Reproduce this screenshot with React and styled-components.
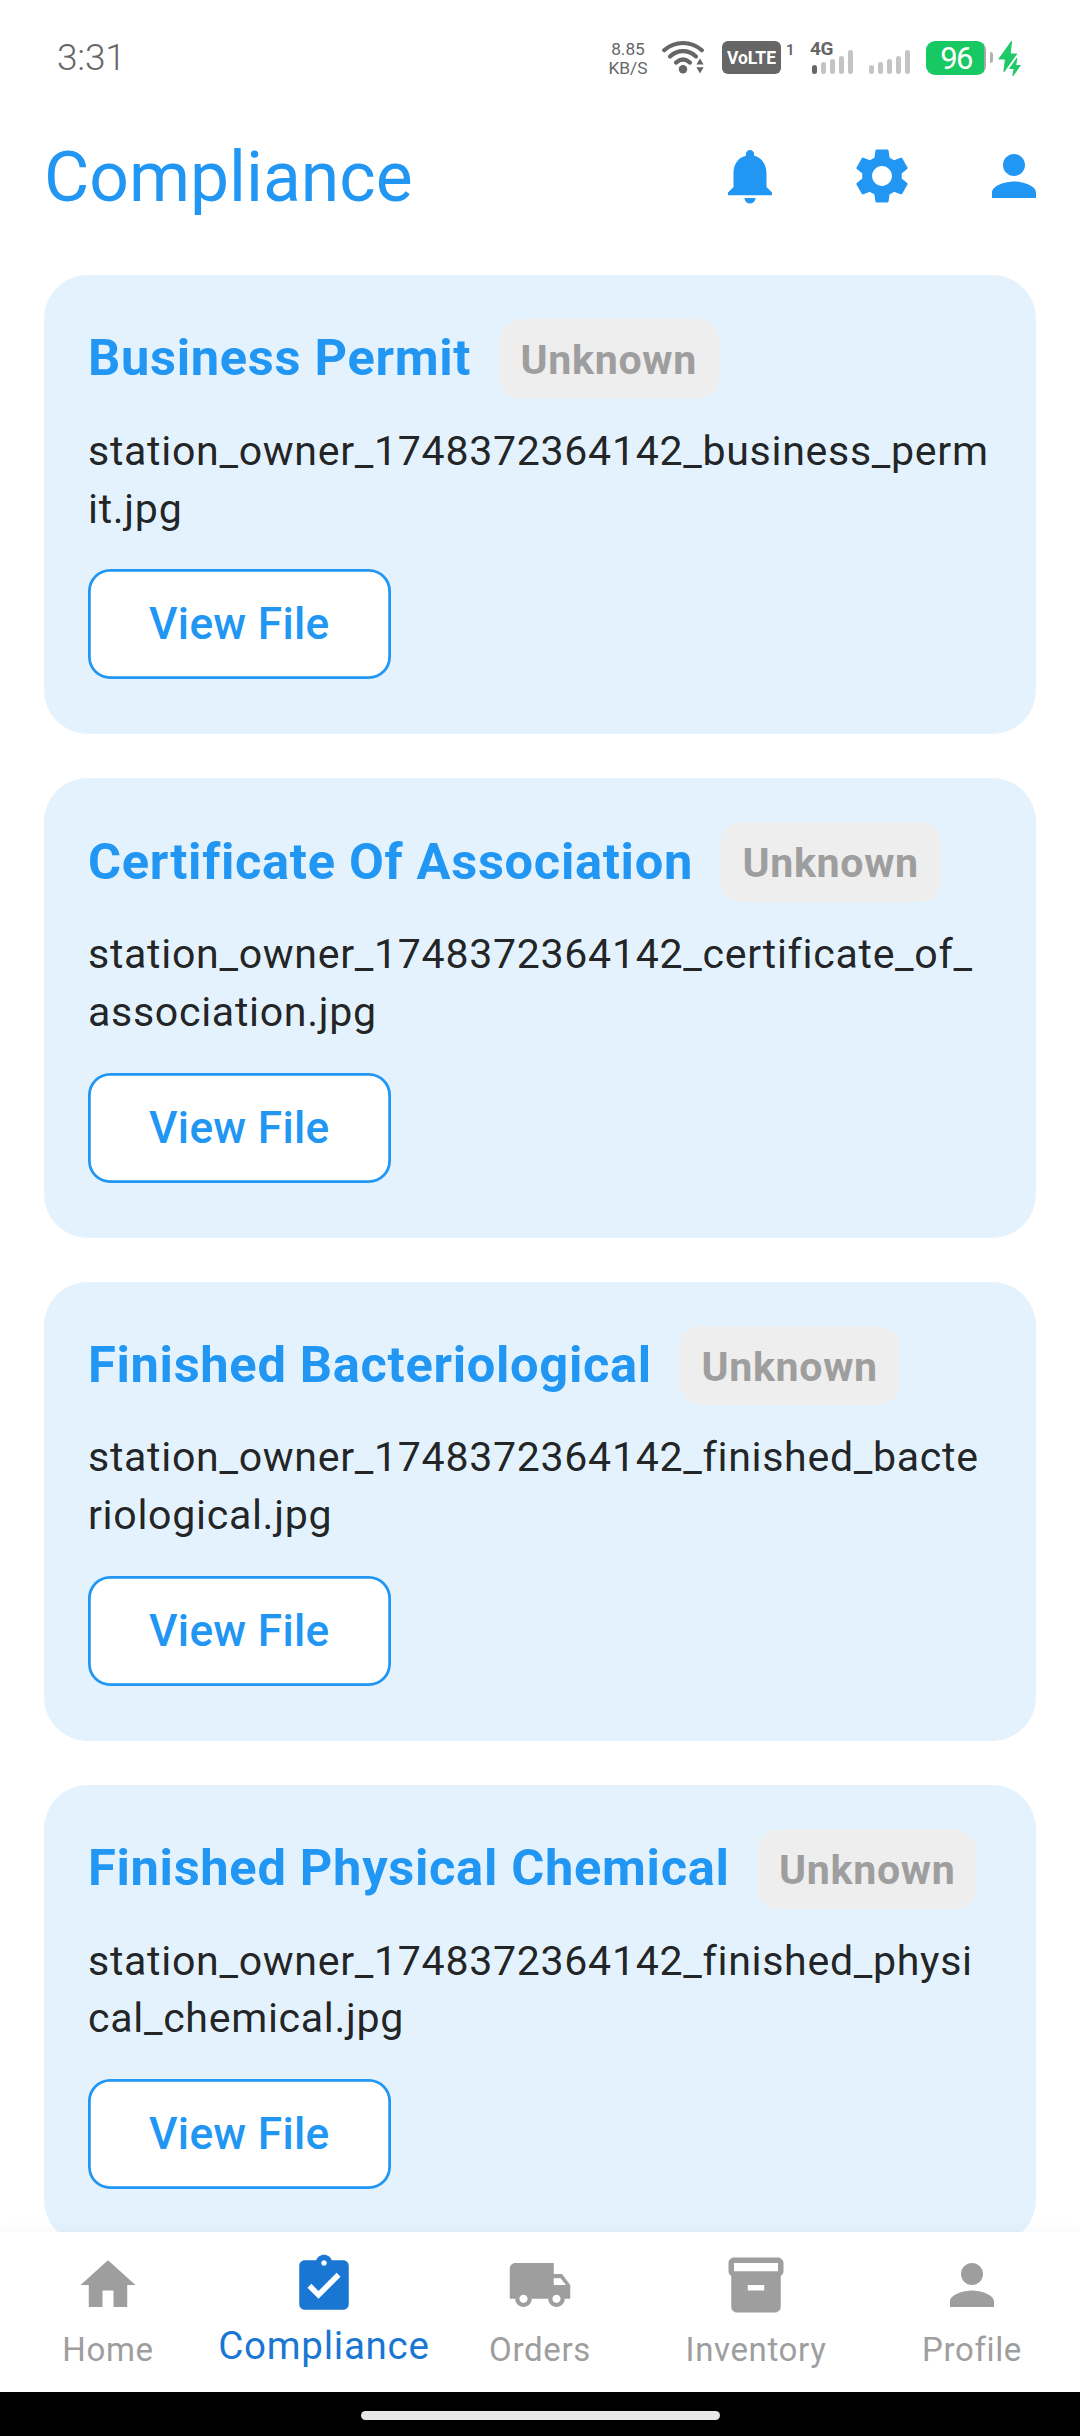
import React from "react";
import styled, { createGlobalStyle } from "styled-components";
import {
  MdNotifications,
  MdSettings,
  MdPerson,
  MdHome,
  MdAssignmentTurnedIn,
  MdLocalShipping,
  MdInventory2,
} from "react-icons/md";

const GlobalStyle = createGlobalStyle`
  * { box-sizing: border-box; }
  body { margin: 0; background: #fff; font-family: Roboto, sans-serif; }
`;

const Screen = styled.div`
  width: 1080px;
  height: 2436px;
  display: flex;
  flex-direction: column;
  overflow: hidden;
  background: #fff;
`;

const StatusBar = styled.div`
  flex: none;
  height: 99px;
  padding: 0 59px 0 57px;
  display: flex;
  justify-content: space-between;
  align-items: flex-start;
  color: #666;
`;

const Clock = styled.div`
  padding-top: 37px;
  font-size: 37px;
  line-height: 42px;
  font-weight: 350;
  letter-spacing: -0.2px;
`;

const StatusIcons = styled.div`
  padding-top: 40px;
  display: flex;
  align-items: flex-start;
`;

const NetSpeed = styled.div`
  width: 40px;
  margin-right: 14px;
  text-align: center;
  font-size: 17.3px;
  line-height: 18.5px;
  white-space: nowrap;
`;

const VolteBadge = styled.div`
  width: 59px;
  height: 33px;
  margin: 1px 5px 0 17px;
  border-radius: 6px;
  background: #666;
  color: #fff;
  font: 700 17.5px/34px Roboto, sans-serif;
  text-align: center;
`;

const SimIndex = styled.div`
  width: 8px;
  margin: 4px 16px 0 0;
  font-size: 15px;
  line-height: 12px;
  font-weight: 600;
`;

const Signal = styled.div`
  width: ${(p) => p.$width}px;
  height: 34px;
  margin-right: ${(p) => p.$after}px;
  display: flex;
  align-items: flex-end;
  gap: 4px;
  padding-left: 2px;
  position: relative;
`;

const SignalBar = styled.span`
  width: 5px;
  height: ${(p) => p.$height}px;
  border-radius: 2.5px;
  background: ${(p) => (p.$on ? "#666" : "#c4c4c4")};
`;

const SignalType = styled.span`
  position: absolute;
  left: 0;
  top: 1px;
  font-size: 19px;
  line-height: 16px;
  font-weight: 700;
  letter-spacing: -0.3px;
`;

const Battery = styled.div`
  width: 60px;
  height: 34px;
  margin-top: 1px;
  border-radius: 9px;
  background: linear-gradient(90deg, #18c863 58px, #a8a8a8 58px);
  color: #fff;
  font-size: 31px;
  line-height: 35px;
  font-weight: 400;
  letter-spacing: -1.6px;
  text-align: center;
`;

const BatteryNub = styled.div`
  width: 3px;
  height: 11px;
  margin: 12px 5px 0 4px;
  border-radius: 0 3px 3px 0;
  background: #b0b0b0;
`;

const AppBar = styled.header`
  flex: none;
  height: 154px;
  padding-left: 44px;
  display: flex;
  align-items: center;
  justify-content: space-between;
  color: #2196f3;
`;

const PageTitle = styled.h1`
  margin: 0;
  padding-top: 2px;
  font-size: 69.6px;
  line-height: 88px;
  font-weight: 400;
`;

const Actions = styled.div`
  display: flex;
`;

const IconButton = styled.button`
  width: 132px;
  height: 132px;
  padding: 0;
  border: 0;
  background: none;
  color: inherit;
  display: flex;
  align-items: center;
  justify-content: center;
  font-size: 66px;
`;

const CardList = styled.main`
  flex: 1;
  min-height: 0;
  overflow: hidden;
  padding: 22px 44px 0;
  display: flex;
  flex-direction: column;
  gap: 44px;
`;

const Card = styled.section`
  flex: none;
  height: 459.25px;
  padding: 44px;
  border-radius: 44px;
  background: #e3f2fd;
  display: flex;
  flex-direction: column;
  align-items: flex-start;
`;

const CardHeader = styled.div`
  height: 79.75px;
  display: flex;
  align-items: center;
  gap: 27.5px;
  white-space: nowrap;
`;

const CardTitle = styled.h2`
  margin: 0;
  color: #2196f3;
  font-size: 50.6px;
  line-height: 74px;
  padding-bottom: 1px;
  font-weight: 700;
  letter-spacing: 0.69px;
`;

const Status = styled.span`
  padding: 13px 22px 9px;
  border-radius: 22px;
  background: #eee;
  color: #9e9e9e;
  font-size: 41.1px;
  line-height: 57.75px;
  font-weight: 700;
  letter-spacing: 0.69px;
`;

const FileName = styled.p`
  margin: 24px 0 31px;
  color: rgba(0, 0, 0, 0.87);
  font-size: 41.1px;
  line-height: 57.75px;
  letter-spacing: 0.69px;
  word-break: break-all;
`;

const ViewButton = styled.button`
  width: 302.5px;
  height: 110px;
  padding: 0;
  border: 0;
  border-radius: 22px;
  box-shadow: inset 0 0 0 2.75px #2196f3;
  background: #fff;
  color: #2196f3;
  font: 500 44.2px/52px Roboto, sans-serif;
  letter-spacing: 0.3px;
`;

const BottomNav = styled.nav`
  flex: none;
  height: 160px;
  display: grid;
  grid-template-columns: repeat(5, minmax(0, 1fr));
  background: #fff;
  box-shadow: 0 -2px 14px rgba(0, 0, 0, 0.03);
`;

const NavItem = styled.a`
  padding-top: 20px;
  display: flex;
  flex-direction: column;
  align-items: center;
  color: ${(p) => (p.$active ? "#1976d2" : "#9e9e9e")};
  font-size: 66px;
  svg { display: block; }
`;

const NavLabel = styled.span`
  margin-top: 7px;
  font-size: ${(p) => (p.$active ? 38.5 : 33)}px;
  line-height: ${(p) => (p.$active ? 42 : 50)}px;
  letter-spacing: ${(p) => (p.$active ? 0.75 : 0.65)}px;
`;

const GestureBar = styled.div`
  flex: none;
  height: 44px;
  padding-top: 19px;
  display: flex;
  justify-content: center;
  background: #000;
`;

const GesturePill = styled.div`
  width: 359px;
  height: 9px;
  border-radius: 5px;
  background: #e8e8e8;
`;

const documents = [
  ["Business Permit", "business_permit"],
  ["Certificate Of Association", "certificate_of_association"],
  ["Finished Bacteriological", "finished_bacteriological"],
  ["Finished Physical Chemical", "finished_physical_chemical"],
];

const tabs = [
  ["Home", MdHome],
  ["Compliance", MdAssignmentTurnedIn],
  ["Orders", MdLocalShipping],
  ["Inventory", MdInventory2],
  ["Profile", MdPerson],
];

const barHeights = [9, 12, 15, 18.5, 24];

function Bars({ active, label, width, after }) {
  return (
    <Signal $width={width} $after={after}>
      {label && <SignalType>{label}</SignalType>}
      {barHeights.map((h, i) => (
        <SignalBar key={h} $height={h} $on={i < active} />
      ))}
    </Signal>
  );
}

function WifiIcon() {
  return (
    <svg width="43" height="34" viewBox="0 0 43 34">
      <g fill="none" stroke="#666" strokeWidth="4.2" strokeLinecap="round">
        <path d="M2.2 10.200C13 0.600 29 0.600 39.800 10.200" />
        <path d="M8 16.600C15.500 9.400 26.500 9.400 34 16.600" />
        <path d="M14 22.600C18.500 18.600 23.500 18.600 28 22.600" />
      </g>
      <circle cx="21" cy="29.300" r="4.200" fill="#666" />
      <path d="M38 18.500l3.600 6h-7.200zM38 33.500l3.600-6.200h-7.200z" fill="#666" />
    </svg>
  );
}

function ChargeIcon() {
  return (
    <svg width="23" height="37" viewBox="0 0 23 37">
      <g fill="#20c968" stroke="#20c968" strokeWidth="1.2" strokeLinejoin="round">
        <path d="M13.500 1.500L1 19h6.500L6 31.500L18.500 14H12z" />
        <path d="M19 17.500L11.500 28.500h4.200L14.500 36L22.500 25H18z" stroke="#fff" strokeWidth="3" />
        <path d="M18.800 18.500L12 28.300h4.200L15 35.500L22 25.500H17.500z" />
      </g>
    </svg>
  );
}

export default function App() {
  return (
    <>
      <GlobalStyle />
      <Screen>
        <StatusBar>
          <Clock>3:31</Clock>
          <StatusIcons>
            <NetSpeed>
              8.85
              <br />
              KB/S
            </NetSpeed>
            <WifiIcon />
            <VolteBadge>VoLTE</VolteBadge>
            <SimIndex>1</SimIndex>
            <Bars active={1} label="4G" width={45} after={12} />
            <Bars active={0} width={45} after={14} />
            <Battery>96</Battery>
            <BatteryNub />
            <ChargeIcon />
          </StatusIcons>
        </StatusBar>
        <AppBar>
          <PageTitle>Compliance</PageTitle>
          <Actions>
            <IconButton aria-label="Notifications"><MdNotifications /></IconButton>
            <IconButton aria-label="Settings"><MdSettings /></IconButton>
            <IconButton aria-label="Account"><MdPerson /></IconButton>
          </Actions>
        </AppBar>
        <CardList>
          {documents.map(([title, slug]) => (
            <Card key={slug}>
              <CardHeader>
                <CardTitle>{title}</CardTitle>
                <Status>Unknown</Status>
              </CardHeader>
              <FileName>{`station_owner_1748372364142_${slug}.jpg`}</FileName>
              <ViewButton>View File</ViewButton>
            </Card>
          ))}
        </CardList>
        <BottomNav>
          {tabs.map(([label, Icon]) => (
            <NavItem key={label} $active={label === "Compliance"}>
              <Icon />
              <NavLabel $active={label === "Compliance"}>{label}</NavLabel>
            </NavItem>
          ))}
        </BottomNav>
        <GestureBar>
          <GesturePill />
        </GestureBar>
      </Screen>
    </>
  );
}
